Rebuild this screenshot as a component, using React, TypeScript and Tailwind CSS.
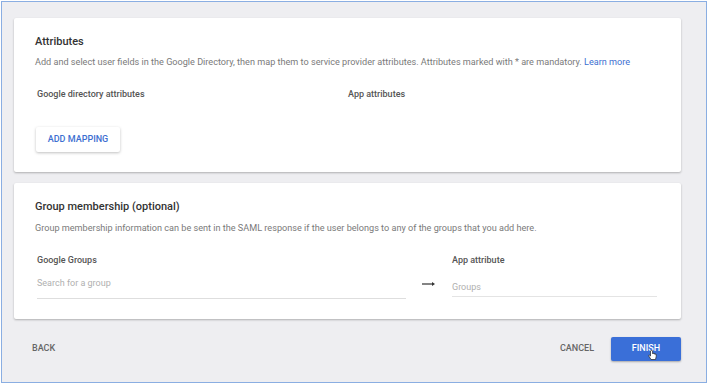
import React from "react";

export default function App() {
  return (
    <div className="w-[708px] h-[384px] bg-white" style={{ fontFamily: "Roboto, 'Liberation Sans', sans-serif" }}>
      <div className="m-px w-[706px] h-[382px] border border-[#8aaee2] bg-[#eeeef1] flex flex-col px-[12px] pt-[16px]">
        {/* Card 1 */}
        <div className="w-[667px] bg-white rounded-[2px] shadow-[0_1px_2px_rgba(0,0,0,0.2),0_1px_3px_rgba(0,0,0,0.08)] h-[154px] pl-[21px] pt-[17px] flex flex-col">
          <div className="text-[11px] leading-[14px] font-medium text-[#333]">Attributes</div>
          <div className="mt-[7px] text-[9.12px] leading-[13px] text-[#7a7a7a] whitespace-nowrap">
            Add and select user fields in the Google Directory, then map them to service provider attributes. Attributes marked with * are mandatory.{" "}
            <span className="text-[#3d6fd1]">Learn more</span>
          </div>
          <div className="mt-[19px] flex text-[9px] leading-[13px] font-medium text-[#555]">
            <div className="w-[313px] pl-[2px]">Google directory attributes</div>
            <div>App attributes</div>
          </div>
          <div className="mt-[24px]">
            <div className="inline-flex items-center justify-center w-[84px] h-[25px] bg-white rounded-[2px] shadow-[0_1px_3px_rgba(0,0,0,0.25)] text-[9px] font-medium text-[#3d6fd1] ml-[1px]">
              ADD MAPPING
            </div>
          </div>
        </div>

        {/* Card 2 */}
        <div className="w-[667px] mt-[11px] bg-white rounded-[2px] shadow-[0_1px_2px_rgba(0,0,0,0.2),0_1px_3px_rgba(0,0,0,0.08)] h-[136px] pl-[21px] pt-[17px] flex flex-col">
          <div className="text-[11px] leading-[14px] font-medium text-[#333]">Group membership (optional)</div>
          <div className="mt-[8px] text-[9.12px] leading-[13px] text-[#7a7a7a] whitespace-nowrap">
            Group membership information can be sent in the SAML response if the user belongs to any of the groups that you add here.
          </div>
          <div className="mt-[19px] flex">
            <div className="w-[369px] ml-[2px] flex flex-col">
              <div className="text-[9px] leading-[13px] font-medium text-[#555]">Google Groups</div>
              <div className="mt-[10px] text-[9px] leading-[13px] text-[#b0b0b0] pb-[8px] border-b border-[#dedede]">Search for a group</div>
            </div>
            <div className="w-[46px] flex justify-center pt-[26px]">
              <svg width="14" height="6" viewBox="0 0 14 6" className="mt-[1px]">
                <path d="M0 3 H11" stroke="#333" strokeWidth="1.2" />
                <path d="M10 1 L13 3 L10 5 Z" fill="#333" />
              </svg>
            </div>
            <div className="w-[205px] flex flex-col">
              <div className="text-[9px] leading-[13px] font-medium text-[#555]">App attribute</div>
              <div className="mt-[14px] text-[9px] leading-[13px] text-[#b0b0b0] pb-[2px] border-b border-[#e4e4e4]">Groups</div>
            </div>
          </div>
        </div>

        {/* Footer */}
        <div className="w-[667px] mt-[17px] flex items-center h-[25px] pl-[18px]">
          <div className="text-[9px] font-medium text-[#666]">BACK</div>
          <div className="flex-1" />
          <div className="text-[9px] font-medium text-[#666] mr-[17px]">CANCEL</div>
          <div className="relative w-[70px] h-[24px] bg-[#3a6fd8] rounded-[2px] shadow-[0_1px_2px_rgba(0,0,0,0.3)] flex items-center justify-center text-[9px] font-medium text-white">
            FINISH
            <svg className="absolute left-[37px] top-[13px]" width="9" height="11" viewBox="0 0 9 11">
              <path d="M2.5 1 V6 L1.5 5.2 C0.8 4.8 0.3 5.4 0.8 6 L3 9.5 H7.5 L8.2 6.5 V4.5 C8.2 3.8 7 3.8 7 4.5 V4 C7 3.3 5.8 3.3 5.8 4 V3.7 C5.8 3 4.6 3 4.6 3.7 V1 C4.6 0.2 2.5 0.2 2.5 1 Z" fill="white" stroke="#222" strokeWidth="0.7" />
            </svg>
          </div>
        </div>
      </div>
    </div>
  );
}
